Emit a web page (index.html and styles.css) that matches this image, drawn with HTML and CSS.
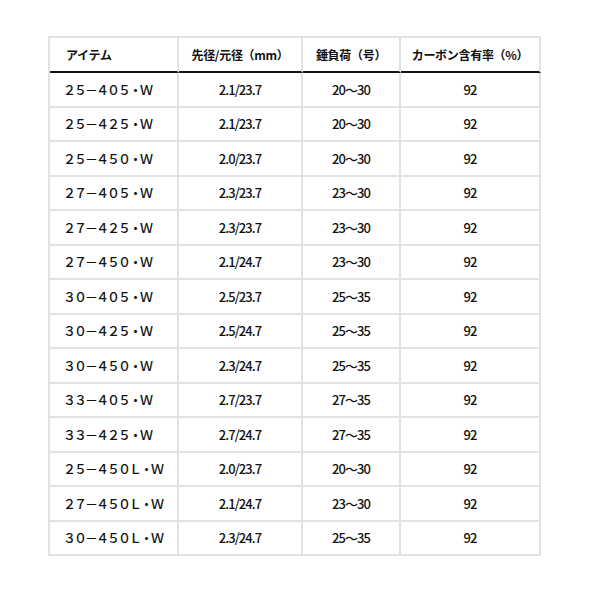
FILE: index.html
```html
<!DOCTYPE html>
<html lang="ja">
<head>
<meta charset="utf-8">
<link rel="stylesheet" href="styles.css">
</head>
<body>
<div class="wrap">
<table class="spec">
<thead>
<tr><th class="c1">アイテム</th><th class="c2">先径/元径（mm）</th><th class="c3">錘負荷（号）</th><th class="c4">カーボン含有率（%）</th></tr>
</thead>
<tbody>
<tr><td class="item">２５－４０５・Ｗ</td><td>2.1/23.7</td><td>20～30</td><td>92</td></tr>
<tr><td class="item">２５－４２５・Ｗ</td><td>2.1/23.7</td><td>20～30</td><td>92</td></tr>
<tr><td class="item">２５－４５０・Ｗ</td><td>2.0/23.7</td><td>20～30</td><td>92</td></tr>
<tr><td class="item">２７－４０５・Ｗ</td><td>2.3/23.7</td><td>23～30</td><td>92</td></tr>
<tr><td class="item">２７－４２５・Ｗ</td><td>2.3/23.7</td><td>23～30</td><td>92</td></tr>
<tr><td class="item">２７－４５０・Ｗ</td><td>2.1/24.7</td><td>23～30</td><td>92</td></tr>
<tr><td class="item">３０－４０５・Ｗ</td><td>2.5/23.7</td><td>25～35</td><td>92</td></tr>
<tr><td class="item">３０－４２５・Ｗ</td><td>2.5/24.7</td><td>25～35</td><td>92</td></tr>
<tr><td class="item">３０－４５０・Ｗ</td><td>2.3/24.7</td><td>25～35</td><td>92</td></tr>
<tr><td class="item">３３－４０５・Ｗ</td><td>2.7/23.7</td><td>27～35</td><td>92</td></tr>
<tr><td class="item">３３－４２５・Ｗ</td><td>2.7/24.7</td><td>27～35</td><td>92</td></tr>
<tr><td class="item">２５－４５０Ｌ・Ｗ</td><td>2.0/23.7</td><td>20～30</td><td>92</td></tr>
<tr><td class="item">２７－４５０Ｌ・Ｗ</td><td>2.1/24.7</td><td>23～30</td><td>92</td></tr>
<tr><td class="item">３０－４５０Ｌ・Ｗ</td><td>2.3/24.7</td><td>25～35</td><td>92</td></tr>
</tbody>
</table>
</div>
</body>
</html>
```
FILE: styles.css
```css
html, body {
  margin: 0;
  padding: 0;
  background: #ffffff;
}
.wrap {
  padding: 36px 0 0 48px;
}
.spec {
  border-collapse: separate;
  border-spacing: 0;
  table-layout: fixed;
  box-sizing: border-box;
  width: 493px;
  border-left: 2px solid #e2e2e2;
  border-top: 2px solid #e2e2e2;
  font-family: "Noto Sans CJK JP", sans-serif;
  font-size: 13px;
  color: #111;
}
.spec th, .spec td {
  box-sizing: border-box;
  border-right: 2px solid #e2e2e2;
  border-bottom: 2px solid #e2e2e2;
  text-align: center;
  font-weight: normal;
}
.spec th {
  padding: 6.5px 4px;
  line-height: 20px;
  font-weight: bold;
  font-size: 12px;
  letter-spacing: -0.3px;
  border-bottom-color: #151515;
  color: #111;
}
.spec td {
  padding: 6.5px 8px;
  line-height: 19.5px;
  letter-spacing: -0.9px;
  font-weight: 500;
}
.spec .c1 { width: 129px; text-align: left; padding-left: 16px; }
.spec .c2 { width: 124px; }
.spec .c3 { width: 98px; }
.spec .c4 { width: 140px; }
.spec td.item {
  text-align: left;
  padding-left: 13px;
  letter-spacing: -2px;
}
```
